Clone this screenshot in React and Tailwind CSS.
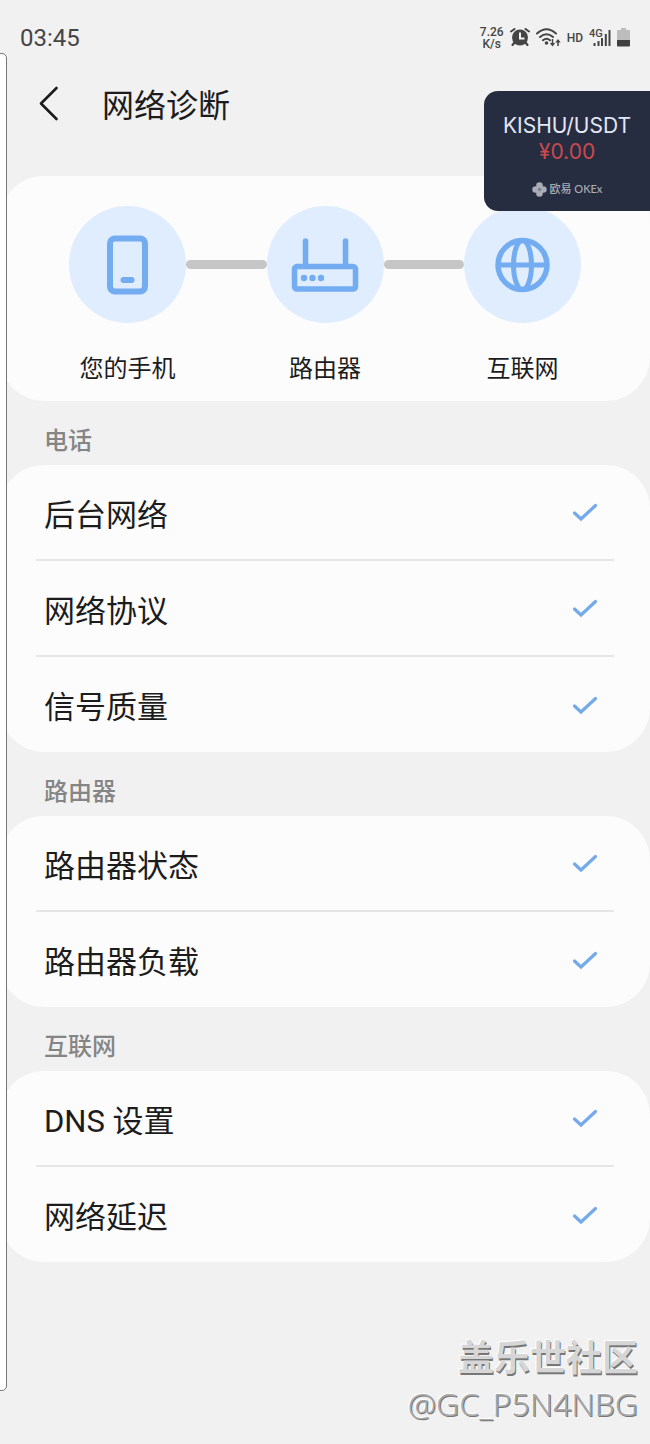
const sections = [
  { title: '电话', items: ['后台网络', '网络协议', '信号质量'] },
  { title: '路由器', items: ['路由器状态', '路由器负载'] },
  { title: '互联网', items: ['DNS 设置', '网络延迟'] },
];

function PhoneIcon() {
  return (
    <svg className="h-[60px] w-[42px]" viewBox="0 0 42 60" fill="none" aria-hidden="true">
      <rect x="3" y="3.500" width="35" height="53" rx="5" stroke="#74acf2" strokeWidth="6" />
      <path d="M16.500 45h8" stroke="#74acf2" strokeWidth="6" strokeLinecap="round" />
    </svg>
  );
}

function RouterIcon() {
  return (
    <svg className="h-[56px] w-[68px]" viewBox="0 0 68 56" fill="none" stroke="#74acf2" aria-hidden="true">
      <rect x="3.500" y="29.500" width="61" height="22.500" rx="2.500" strokeWidth="5.500" />
      <path d="M14.500 4v24M54.500 4v24" strokeWidth="5.500" strokeLinecap="round" />
      <g fill="#74acf2" stroke="none">
        <circle cx="13" cy="41" r="3.200" />
        <circle cx="21.500" cy="41" r="3.200" />
        <circle cx="30" cy="41" r="3.200" />
      </g>
    </svg>
  );
}

function GlobeIcon() {
  return (
    <svg className="size-[56px]" viewBox="0 0 56 56" fill="none" stroke="#74acf2" strokeWidth="5" aria-hidden="true">
      <circle cx="27.500" cy="28" r="24.500" strokeWidth="5.500" />
      <ellipse cx="27.500" cy="28" rx="9" ry="24.500" />
      <path d="M4 28h47" />
    </svg>
  );
}

function CheckIcon() {
  return (
    <svg className="h-5 w-[26px] shrink-0" viewBox="0 0 26 20" fill="none" aria-label="正常" role="img">
      <path d="M2.500 11 9 17 23.500 3.500" stroke="#74a9ea" strokeWidth="3.200" strokeLinecap="round" strokeLinejoin="miter" />
    </svg>
  );
}

function AlarmIcon() {
  return (
    <svg className="h-5 w-5" viewBox="0 0 20 20" fill="none" stroke="#454545" aria-hidden="true">
      <circle cx="10" cy="9.500" r="8" fill="#454545" stroke="none" />
      <path d="M10 4.500v6h4.500" stroke="#f1f1f1" strokeWidth="2" />
      <path d="M1 3.500 4.500 1M19 3.500l-3.500-2.500" strokeWidth="2" strokeLinecap="round" />
      <path d="m4.500 14.500-2 2.500M15.500 14.500l2 2.500" strokeWidth="2.200" strokeLinecap="round" />
    </svg>
  );
}

function WifiIcon() {
  return (
    <svg className="h-5 w-[25px]" viewBox="0 0 25 20" fill="none" stroke="#454545" strokeWidth="2" aria-hidden="true">
      <path d="M1 5.500Q10.500-3 20 5.500M4 9q6.500-5.500 13 0M7 12.300q3.500-3 7 0" strokeLinecap="round" />
      <circle cx="10.500" cy="15" r="1.800" fill="#454545" stroke="none" />
      <path d="M16.500 11v5M22 18v-5" strokeWidth="1.500" />
      <path d="M13.800 15h5.400l-2.700 3.500zM19.300 14.500h5.400l-2.700-3.500z" fill="#454545" stroke="none" />
    </svg>
  );
}

function SignalIcon() {
  return (
    <svg className="h-5 w-[22px]" viewBox="0 0 22 20" aria-hidden="true">
      <text x="0" y="9" className="fill-[#454545] font-[Roboto] text-[11px] font-medium">4G</text>
      <path d="M5.500 18v-3M9.500 18v-5M13 18v-8M16.800 18V6M20.500 18V2" stroke="#454545" strokeWidth="2" />
    </svg>
  );
}

function BatteryIcon() {
  return (
    <svg className="h-5 w-[13px]" viewBox="0 0 13 20" aria-hidden="true">
      <path d="M4 0h5v2h3a1 1 0 0 1 1 1v9H0V3a1 1 0 0 1 1-1h3z" fill="#bdbdbd" />
      <path d="M0 12h13v5.500a1 1 0 0 1-1 1H1a1 1 0 0 1-1-1z" fill="#404040" />
    </svg>
  );
}

function OkexLogo() {
  return (
    <svg className="size-[15px]" viewBox="0 0 15 15" fill="#a9adb6" aria-hidden="true">
      <circle cx="7.500" cy="3.600" r="3.300" />
      <circle cx="3.600" cy="7.500" r="3.300" />
      <circle cx="11.400" cy="7.500" r="3.300" />
      <circle cx="7.500" cy="11.400" r="3.300" />
      <path d="m7.500 5.500 2 2-2 2-2-2z" fill="#777c88" />
    </svg>
  );
}

function Node({ label, children }) {
  return (
    <div className="flex w-[117px] shrink-0 flex-col items-center">
      <div className="flex size-[117px] items-center justify-center rounded-full bg-[#dfedfe]">{children}</div>
      <span className="mt-7 text-2xl leading-9 whitespace-nowrap">{label}</span>
    </div>
  );
}

function Connector() {
  return <div className="mt-[54px] h-[9px] flex-1 rounded-full bg-[#c6c6c6]" />;
}

function Section({ title, items }) {
  return (
    <section>
      <h2 className="flex h-16 items-center px-11 pt-4 text-2xl font-medium text-[#858585]">{title}</h2>
      <ul className="rounded-[44px] bg-[#fcfcfc] px-9">
        {items.map((item) => (
          <li
            key={item}
            className="flex h-24 items-center justify-between border-b-2 border-[#e6e6e6] px-2 last:h-[95px] last:border-b-0"
          >
            <span className="pt-1.5 text-[31px] leading-[47px]">{item}</span>
            <span className="mr-2 flex">
              <CheckIcon />
            </span>
          </li>
        ))}
      </ul>
    </section>
  );
}

function PriceWidget() {
  return (
    <aside className="absolute top-[91px] right-0 flex h-[120px] w-[166px] flex-col items-center rounded-l-[14px] bg-[#272d40] pt-[22px] font-[Inter,'Noto_Sans_CJK_SC',sans-serif]">
      <p className="text-[21px] leading-[26px] text-[#e3e7f5]">KISHU/USDT</p>
      <p className="text-[21px] leading-[26px] text-[#c9494f]">¥0.00</p>
      <p className="mt-4 flex items-center gap-[3px] font-[Lato,'Noto_Sans_CJK_SC',sans-serif] text-[11px] leading-4 font-medium text-[#a9adb6]">
        <OkexLogo />
        欧易 OKEx
      </p>
    </aside>
  );
}

export default function App() {
  return (
    <div className="relative flex min-h-screen flex-col overflow-hidden bg-[#f1f1f1] font-[Roboto,'Noto_Sans_CJK_SC',sans-serif] text-[#1c1c1c]">
      <header>
        <div className="flex h-[76px] items-center justify-between px-5 text-[#454545]">
          <time className="text-2xl">03:45</time>
          <div className="flex items-center gap-1.5">
            <div className="flex flex-col items-center text-xs leading-3 font-medium">
              <span>7.26</span>
              <span>K/s</span>
            </div>
            <AlarmIcon />
            <WifiIcon />
            <span className="text-xs font-medium">HD</span>
            <SignalIcon />
            <BatteryIcon />
          </div>
        </div>
        <div className="flex h-[100px] items-start gap-10 pl-9">
          <button type="button" aria-label="返回" className="mt-[9px] flex h-9 w-[26px] items-center">
            <svg className="h-9 w-[26px]" viewBox="0 0 26 36" fill="none" aria-hidden="true">
              <path d="M20.500 3 5 18.500 20.500 34" stroke="#1c1c1c" strokeWidth="2.600" strokeLinecap="round" strokeLinejoin="round" />
            </svg>
          </button>
          <h1 className="mt-1.5 text-[32px] leading-[48px]">网络诊断</h1>
        </div>
      </header>

      <main>
        <div className="flex h-[225px] items-start rounded-[44px] bg-[#fcfcfc] px-[69px] pt-[30px]">
          <Node label="您的手机">
            <PhoneIcon />
          </Node>
          <Connector />
          <Node label="路由器">
            <RouterIcon />
          </Node>
          <Connector />
          <Node label="互联网">
            <GlobeIcon />
          </Node>
        </div>
        {sections.map((section) => (
          <Section key={section.title} {...section} />
        ))}
      </main>

      <footer className="mt-auto flex flex-col items-end pr-3 pb-4 text-[#d6d6d6]">
        <p className="text-4xl leading-[42px] font-bold [text-shadow:1px_2px_0_#777,-1px_-1px_0_#fff]">盖乐世社区</p>
        <p className="font-['Noto_Sans',sans-serif] text-[32px] leading-[48px] font-light text-[#a8a8a8] [text-shadow:1px_1px_0_#777,-1px_-1px_0_#fff]">
          @GC_P5N4NBG
        </p>
      </footer>

      <PriceWidget />
      {/* edge panel handle */}
      <div className="absolute top-[53px] bottom-[53px] -left-1 w-[11px] rounded-[5px] border border-[#777] bg-white" />
    </div>
  );
}
